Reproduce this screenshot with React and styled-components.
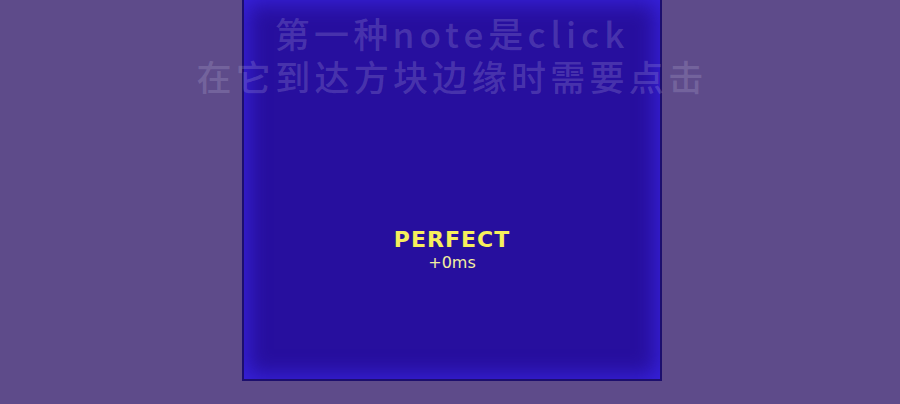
import styled, { createGlobalStyle } from "styled-components";

const GlobalStyle = createGlobalStyle`
  html, body {
    margin: 0;
    padding: 0;
    background: #5e4b8a;
  }
  body {
    font-family: "Liberation Sans", "Noto Sans CJK SC", sans-serif;
  }
`;

const Stage = styled.div`
  position: relative;
  width: 900px;
  height: 404px;
  display: flex;
  justify-content: center;
  overflow: hidden;
`;

const Board = styled.div`
  width: 420px;
  height: 381px;
  margin-left: 4px;
  box-sizing: border-box;
  border: 2px solid #1d0f6e;
  border-top: none;
  background: #270f9e;
  box-shadow: inset 0 0 22px 3px rgba(60, 40, 240, 0.8);
  display: flex;
  flex-direction: column;
  align-items: center;
  padding-top: 227px;
`;

const Judge = styled.div`
  font-family: "DejaVu Sans", "Liberation Sans", sans-serif;
  font-weight: bold;
  font-size: 22px;
  letter-spacing: 1px;
  color: #f6ef5c;
  line-height: 26px;
`;

const Offset = styled.div`
  font-family: "DejaVu Sans", "Liberation Sans", sans-serif;
  font-size: 16px;
  font-weight: 500;
  color: #f3efa0;
  line-height: 19px;
`;

const Subtitle = styled.div`
  position: absolute;
  top: 11px;
  left: 4px;
  right: 0;
  text-align: center;
  font-family: "Noto Sans CJK SC", sans-serif;
  font-size: 35px;
  font-weight: 500;
  letter-spacing: 4.3px;
  line-height: 43px;
  color: rgba(210, 205, 235, 0.2);
`;

const Latin = styled.span`
  letter-spacing: 5px;
`;

export default function App() {
  return (
    <>
      <GlobalStyle />
      <Stage>
        <Board>
          <Judge>PERFECT</Judge>
          <Offset>+0ms</Offset>
        </Board>
        <Subtitle>
          第一种<Latin>note</Latin>是<Latin>click</Latin>
          <br />
          在它到达方块边缘时需要点击
        </Subtitle>
      </Stage>
    </>
  );
}
